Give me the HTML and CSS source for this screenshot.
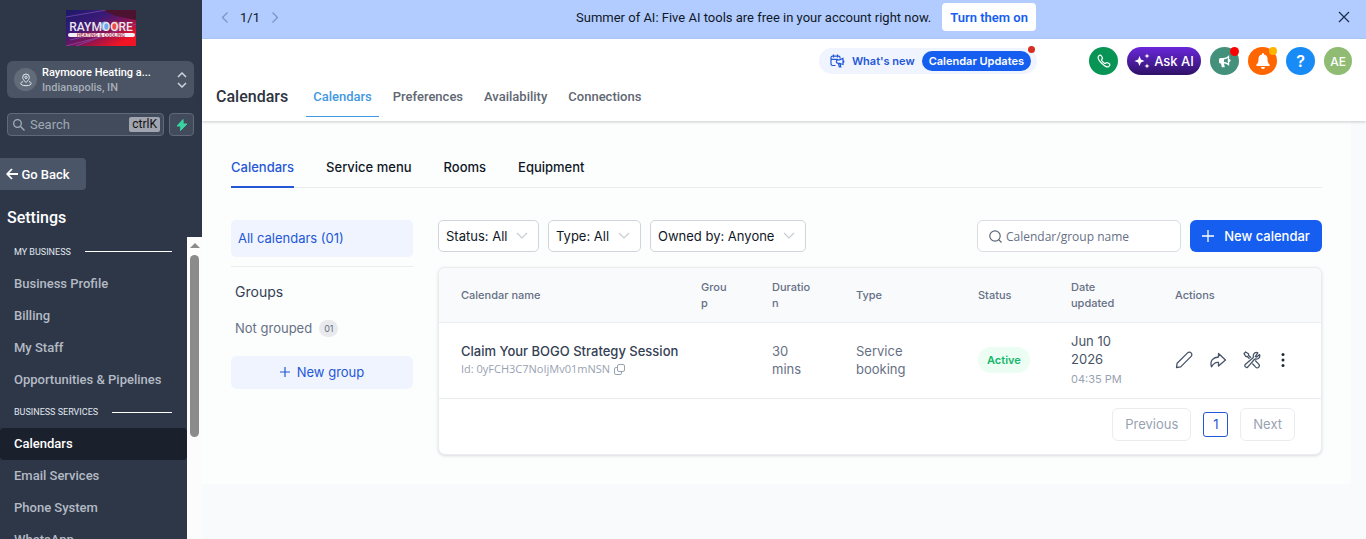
FILE: index.html
```html
<!DOCTYPE html>
<html lang="en">
<head>
  <meta charset="UTF-8">
  <meta name="viewport" content="width=device-width, initial-scale=1.0">
  <title>Calendars</title>
  <link rel="stylesheet" href="styles.css">
</head>
<body>
  <div class="app">
    <aside class="sidebar">
      <svg class="logo" viewBox="0 0 70 36" role="img" aria-label="Raymoore Heating and Cooling">
        <defs>
          <linearGradient id="logoBg" x1="0" y1="0" x2="1" y2="1">
            <stop offset="0" stop-color="#1b1a68"/>
            <stop offset="0.35" stop-color="#3c1a78"/>
            <stop offset="0.6" stop-color="#8a1450"/>
            <stop offset="0.85" stop-color="#f01424"/>
          </linearGradient>
        </defs>
        <rect width="70" height="36" fill="url(#logoBg)"/>
        <path d="M35 0H70V10L50 6Z" fill="#4b1330"/>
        <path d="M0 7L40 0M0 36L46 24M4 30L30 24M10 36L70 14" stroke="#8a5ac8" stroke-width="1" opacity="0.6"/>
        <circle cx="39" cy="16" r="4.500" fill="#6aa8f0"/>
        <circle cx="49" cy="16" r="4.500" fill="#f04848"/>
        <text class="logo-name" x="35" y="21" text-anchor="middle">RAYMOORE</text>
        <rect x="2" y="23" width="67" height="4" rx="2" fill="#f4eef6"/>
        <text class="logo-sub" x="35" y="27" text-anchor="middle">HEATING &amp; COOLING</text>
      </svg>

      <button class="account">
        <span class="account-icon">
          <svg width="14" height="14" viewBox="0 0 14 14" fill="none" stroke="#e2e8f0"><path d="M7 9.500C4.500 7 3.700 5.800 3.700 4.300a3.300 3.300 0 0 1 6.600 0C10.300 5.800 9.500 7 7 9.500Z"/><circle cx="7" cy="4.300" r="1.200"/><path d="M4 8.600C0 9.700 1.500 12.700 7 12.700s7-3 3-4.100"/></svg>
        </span>
        <span class="account-text">
          <strong>Raymoore Heating a...</strong>
          <span>Indianapolis, IN</span>
        </span>
        <svg width="10" height="16" viewBox="0 0 10 16" fill="none" stroke="#cbd5e0" stroke-width="1.500"><path d="M1 5l4-4 4 4M1 11l4 4 4-4"/></svg>
      </button>

      <div class="search-row">
        <label class="side-search">
          <svg width="12" height="12" viewBox="0 0 12 12" fill="none" stroke="#a0aec0" stroke-width="1.300"><circle cx="4.500" cy="4.500" r="3.800"/><path d="M7.500 7.500l4 4"/></svg>
          <input type="text" placeholder="Search" aria-label="Search">
          <kbd>ctrlK</kbd>
        </label>
        <button class="bolt" aria-label="Quick actions">
          <svg width="12" height="12" viewBox="0 0 12 12" fill="#38d39f"><path d="M7 .500L1 7h3.800l-.300 4.500L11 5H7.200Z" stroke="#38d39f" stroke-linejoin="round"/></svg>
        </button>
      </div>

      <button class="go-back">
        <svg width="12" height="12" viewBox="0 0 12 12" fill="none" stroke="#fff" stroke-width="1.800"><path d="M12 6H1.500M6 1L1.200 6 6 11"/></svg>
        Go Back
      </button>
      <h2>Settings</h2>

      <div class="menu-wrap">
        <nav class="menu">
          <div class="menu-title first">MY BUSINESS</div>
          <a href="#">Business Profile</a>
          <a href="#">Billing</a>
          <a href="#">My Staff</a>
          <a href="#">Opportunities &amp; Pipelines</a>
          <div class="menu-title">BUSINESS SERVICES</div>
          <a href="#" class="active">Calendars</a>
          <a href="#">Email Services</a>
          <a href="#">Phone System</a>
          <a href="#">WhatsApp</a>
        </nav>
        <div class="scrollbar">
          <div class="scroll-arrow"></div>
          <div class="scroll-thumb"></div>
        </div>
      </div>
    </aside>

    <div class="page">
      <div class="banner">
        <div class="pager">
          <svg width="6" height="11" viewBox="0 0 6 11" fill="none" stroke="#7d93c4" stroke-width="1.300"><path d="M5.500.500l-5 5 5 5"/></svg>
          <span>1/1</span>
          <svg width="6" height="11" viewBox="0 0 6 11" fill="none" stroke="#7d93c4" stroke-width="1.300"><path d="M.500.500l5 5-5 5"/></svg>
        </div>
        <div class="banner-text">
          <span>Summer of AI: Five AI tools are free in your account right now.</span>
          <button>Turn them on</button>
        </div>
        <button class="close" aria-label="Close">
          <svg width="12" height="12" viewBox="0 0 12 12" fill="none" stroke="#1e3050" stroke-width="1.300"><path d="M1 1l10 10M11 1L1 11"/></svg>
        </button>
      </div>

      <header class="header">
        <div class="header-actions">
          <button class="whats-new">
            <svg width="15" height="14" viewBox="0 0 15 14" fill="none" stroke="#2457d6" stroke-width="1.200"><path d="M5.500 11.500H2.400A1.400 1.400 0 0 1 1 10.100V3.600a1.400 1.400 0 0 1 1.400-1.400h6.200A1.400 1.400 0 0 1 10 3.600v.800M1 5.300h7M3.500.500v3M7.500.500v3M13 4.500v6L9.500 9.300H8a1.700 1.700 0 0 1 0-3.400h1.500ZM8.500 9.500l.800 3.500h1.500l-.700-3.300M13 6.500c1.200 0 1.200 2 0 2"/></svg>
            <span>What's new</span>
            <span class="updates">Calendar Updates</span>
            <span class="dot"></span>
          </button>
          <button class="circle phone" aria-label="Phone">
            <svg width="14" height="14" viewBox="0 0 14 14" fill="none" stroke="#fff" stroke-width="1.200"><path d="M1.300 2.500C2.500.800 3.600.800 4.400 2l.9 1.500c.4.700.2 1.200-.5 1.800-.4.400-.3.700 0 1.200A8 8 0 0 0 7.500 9.200c.5.400.9.400 1.200 0 .6-.7 1.100-.9 1.800-.5l1.500.9c1.200.8 1.200 1.900-.5 3.100C9 14.200 0 6 1.300 2.500Z"/></svg>
          </button>
          <button class="ask-ai">
            <svg width="16" height="16" viewBox="0 0 16 16" fill="#fff"><path d="M5.500 3l1.400 3.600L10.500 8 6.900 9.400 5.500 13 4.100 9.400.500 8l3.600-1.400ZM13 .500l.7 1.800 1.800.7-1.800.7L13 5.500l-.7-1.800-1.800-.7 1.800-.7ZM13 10.500l.7 1.800 1.800.7-1.800.7-.7 1.800-.7-1.800-1.800-.7 1.800-.7Z"/></svg>
            Ask AI
          </button>
          <button class="circle news" aria-label="Announcements">
            <svg width="14" height="14" viewBox="0 0 14 14" fill="#fff"><path fill-rule="evenodd" d="M11.200 1v4.200a1.400 1.400 0 0 1 0 2.800v4C9.500 10.300 8 9.700 6 9.500l.8 3.700H3.800L3 9.500H2.500A1.500 1.500 0 0 1 1 8V5.500A1.500 1.500 0 0 1 2.500 4H5c2.500 0 4.500-1.200 6.200-3ZM9.800 4C8.500 4.900 7.500 5.300 6 5.400v2.700c1.500.1 2.500.4 3.800 1.200Z"/></svg>
            <span class="dot"></span>
          </button>
          <button class="circle bell" aria-label="Notifications">
            <svg width="14" height="16" viewBox="0 0 14 16" fill="#fff"><path d="M7 0a1 1 0 0 1 1 1v.600A4.500 4.500 0 0 1 11.500 6c0 3 .700 4.300 2 5.500.500.500.200 1.500-.600 1.500H1.100c-.800 0-1.100-1-.600-1.500C1.800 10.300 2.500 9 2.500 6A4.500 4.500 0 0 1 6 1.600V1a1 1 0 0 1 1-1ZM5 14h4a2 2 0 0 1-4 0Z"/></svg>
            <span class="dot"></span>
          </button>
          <button class="circle help">?</button>
          <button class="circle avatar">AE</button>
        </div>
        <nav class="header-nav">
          <h1>Calendars</h1>
          <a href="#" class="active">Calendars</a>
          <a href="#">Preferences</a>
          <a href="#">Availability</a>
          <a href="#">Connections</a>
        </nav>
      </header>

      <main class="content">
        <nav class="tabs">
          <a href="#" class="active">Calendars</a>
          <a href="#">Service menu</a>
          <a href="#">Rooms</a>
          <a href="#">Equipment</a>
        </nav>

        <div class="columns">
          <section class="groups">
            <a href="#" class="all">All calendars (01)</a>
            <h3>Groups</h3>
            <a href="#" class="not-grouped">Not grouped <span>01</span></a>
            <button class="new-group">
              <svg width="10" height="10" viewBox="0 0 10 10" stroke="#2457d6" stroke-width="1.200"><path d="M5 0v10M0 5h10"/></svg>
              New group
            </button>
          </section>

          <section class="list">
            <div class="toolbar">
              <div class="filter">
                <select aria-label="Status"><option>Status: All</option></select>
                <svg width="12" height="8" viewBox="0 0 12 8" fill="none" stroke="#c8ccd2" stroke-width="1.200"><path d="M1 1l5 5 5-5"/></svg>
              </div>
              <div class="filter">
                <select aria-label="Type"><option>Type: All</option></select>
                <svg width="12" height="8" viewBox="0 0 12 8" fill="none" stroke="#c8ccd2" stroke-width="1.200"><path d="M1 1l5 5 5-5"/></svg>
              </div>
              <div class="filter">
                <select aria-label="Owner"><option>Owned by: Anyone</option></select>
                <svg width="12" height="8" viewBox="0 0 12 8" fill="none" stroke="#c8ccd2" stroke-width="1.200"><path d="M1 1l5 5 5-5"/></svg>
              </div>
              <label class="search">
                <svg width="13" height="13" viewBox="0 0 13 13" fill="none" stroke="#5d6673" stroke-width="1.200"><circle cx="6" cy="6" r="5.200"/><path d="M9.700 9.700l2.800 2.800"/></svg>
                <input type="text" placeholder="Calendar/group name" aria-label="Calendar or group name">
              </label>
              <button class="new-calendar">
                <svg width="12" height="12" viewBox="0 0 12 12" stroke="#fff" stroke-width="1.300"><path d="M6 0v12M0 6h12"/></svg>
                New calendar
              </button>
            </div>

            <div class="card">
              <table>
                <colgroup>
                  <col>
                  <col class="col-group">
                  <col class="col-duration">
                  <col class="col-type">
                  <col class="col-status">
                  <col class="col-date">
                  <col class="col-actions">
                </colgroup>
                <thead>
                  <tr>
                    <th>Calendar name</th>
                    <th>Group</th>
                    <th>Duration</th>
                    <th>Type</th>
                    <th>Status</th>
                    <th>Date updated</th>
                    <th>Actions</th>
                  </tr>
                </thead>
                <tbody>
                  <tr>
                    <td>
                      <div class="name">Claim Your BOGO Strategy Session</div>
                      <div class="id">Id: 0yFCH3C7NoIjMv01mNSN
                        <svg width="11" height="11" viewBox="0 0 11 11" fill="none" stroke="#98a2b3"><rect x="3.500" y=".500" width="7" height="7" rx="1.500"/><path d="M3.500 3.500H2A1.500 1.500 0 0 0 .500 5v4A1.500 1.500 0 0 0 2 10.500h4A1.500 1.500 0 0 0 7.500 9V7.500"/></svg>
                      </div>
                    </td>
                    <td></td>
                    <td>30 mins</td>
                    <td>Service booking</td>
                    <td><span class="badge">Active</span></td>
                    <td class="date">Jun 10 2026 <small>04:35 PM</small></td>
                    <td>
                      <div class="actions">
                        <button aria-label="Edit"><svg width="18" height="18" viewBox="0 0 18 18" fill="none" stroke="#475467" stroke-width="1.300" stroke-linejoin="round"><path d="M1.500 16.500l.6-4.200L12.600 1.900a2.400 2.400 0 0 1 3.500 3.500L5.700 15.900Z"/></svg></button>
                        <button aria-label="Share"><svg width="18" height="18" viewBox="0 0 18 18" fill="none" stroke="#475467" stroke-width="1.300" stroke-linejoin="round"><path d="M9.500 2.500L16.500 9 9.500 15V11.500C6.500 11 4.500 12.500 2.500 15.800 .500 9.500 4.500 6.200 9.500 6Z"/></svg></button>
                        <button aria-label="Tools"><svg width="18" height="18" viewBox="0 0 18 18" fill="none" stroke="#475467" stroke-width="1.300" stroke-linejoin="round"><path d="M6.500 7.800L4.200 5.500H2.800L1 2.600 2.600 1l2.900 1.800v1.400L8 6.700M12.300 5.700l2.500-3.900C12.500.700 10 2.500 10.300 5.300c.1.800 0 1.200-.5 1.700l-7.600 6.600a1.800 1.800 0 0 0 2.500 2.500l6.600-7.600c.5-.5.900-.6 1.700-.5 2.800.3 4.400-2 3.500-4.400L13.800 6ZM9.300 12.500l3.400 3.600a2 2 0 0 0 3-3L12.200 9.500"/></svg></button>
                        <button aria-label="More"><svg width="12" height="18" viewBox="0 0 12 18" fill="#1f2937"><circle cx="6" cy="3.500" r="1.500"/><circle cx="6" cy="9" r="1.500"/><circle cx="6" cy="14.500" r="1.500"/></svg></button>
                      </div>
                    </td>
                  </tr>
                </tbody>
              </table>
              <div class="pagination">
                <button disabled>Previous</button>
                <button class="current">1</button>
                <button disabled>Next</button>
              </div>
            </div>
          </section>
        </div>
      </main>
    </div>
  </div>
</body>
</html>
```
FILE: styles.css
```css
* {
  box-sizing: border-box;
}
body {
  margin: 0;
  font-family: Inter, "Liberation Sans", sans-serif;
  font-size: 13px;
  color: #101828;
  background: #f9fafb;
}
h1, h2, h3 {
  margin: 0;
  font-weight: 500;
}
a {
  text-decoration: none;
  color: inherit;
}
button, input, select {
  font: inherit;
  color: inherit;
  margin: 0;
  padding: 0;
  border: none;
  background: none;
}
button {
  display: flex;
  align-items: center;
  justify-content: center;
  cursor: pointer;
}
svg {
  display: block;
  flex-shrink: 0;
}
.app {
  display: flex;
  height: 100vh;
  overflow: hidden;
}

/* sidebar */
.sidebar {
  display: flex;
  flex-direction: column;
  align-items: flex-start;
  flex: 0 0 202px;
  min-width: 0;
  padding-top: 10px;
  background: #2d3748;
  color: #fff;
  font-family: Roboto, sans-serif;
}
.logo {
  width: 70px;
  height: 36px;
  align-self: center;
}
.logo-name {
  font: 500 12px Roboto, sans-serif;
  fill: #e8e6ee;
}
.logo-sub {
  font: bold 5px Roboto, sans-serif;
  fill: #b8405c;
}
.account {
  gap: 5px;
  align-self: stretch;
  height: 37px;
  margin: 15px 8px 0 7px;
  padding: 0 7px;
  border-radius: 6px;
  background: #4a5464;
  text-align: left;
}
.account-icon {
  display: flex;
  align-items: center;
  justify-content: center;
  width: 23px;
  height: 23px;
  border-radius: 50%;
  background: #626b79;
}
.account-text {
  flex: 1;
  font-size: 11px;
  line-height: 15px;
  font-weight: 500;
  color: #a7aeb9;
}
.account-text strong {
  display: block;
  font-weight: 500;
  color: #fff;
}
.search-row {
  display: flex;
  gap: 5px;
  align-self: stretch;
  margin: 15px 8px 0 7px;
}
.side-search {
  display: flex;
  align-items: center;
  gap: 5px;
  flex: 1;
  min-width: 0;
  height: 23px;
  padding: 0 3px 0 5px;
  border: 1px solid #5f6978;
  border-radius: 4px;
  background: #414b5b;
}
.side-search input {
  flex: 1;
  min-width: 0;
  outline: none;
}
.side-search input::placeholder {
  color: #a0a8b4;
}
.side-search kbd {
  padding: 0 3px;
  border-radius: 2px;
  background: #a0a5af;
  color: #111;
  font: 12px/15px Roboto, sans-serif;
}
.bolt {
  width: 25px;
  height: 23px;
  border: 1px solid #5f6978;
  border-radius: 4px;
  background: #414b5b;
}
.go-back {
  gap: 3px;
  width: 86px;
  height: 32px;
  margin-top: 22px;
  padding-right: 10px;
  border-radius: 0 4px 4px 0;
  background: #4a5568;
  font-weight: 500;
}
.sidebar h2 {
  margin: 18px 7px 9px;
  font-size: 16px;
  line-height: 20px;
}
.menu-wrap {
  display: flex;
  align-self: stretch;
  flex: 1;
  min-height: 0;
}
.menu {
  flex: 1;
  min-width: 0;
  overflow: hidden;
}
.menu a {
  display: block;
  height: 32px;
  padding-left: 14px;
  line-height: 32px;
  font-weight: 500;
  color: #b4bac4;
}
.menu a.active {
  border-radius: 4px;
  background: #1a202c;
  color: #fff;
}
.menu-title {
  display: flex;
  align-items: center;
  gap: 14px;
  height: 32px;
  padding: 0 15px 0 14px;
  font-size: 9px;
  color: #e2e8f0;
}
.menu-title.first {
  height: 31px;
  padding-bottom: 2px;
}
.menu-title::after {
  content: "";
  flex: 1;
  height: 1px;
  background: #fff;
}
.scrollbar {
  width: 15px;
  background: #fcfcfc;
}
.scroll-arrow {
  width: 0;
  margin: 6px auto 7px;
  border: 5px solid transparent;
  border-top: none;
  border-bottom-color: #8b8b8b;
}
.scroll-thumb {
  width: 9px;
  height: 182px;
  margin: 0 auto;
  border-radius: 5px;
  background: #8b8b8b;
}

/* top banner */
.page {
  display: flex;
  flex-direction: column;
  flex: 1;
  min-width: 0;
}
.banner {
  display: flex;
  align-items: center;
  height: 39px;
  padding: 0 16px 5px 20px;
  background: #b2ccff;
  font-family: Roboto, sans-serif;
}
.pager {
  display: flex;
  align-items: center;
  gap: 12px;
  flex: 0 0 60px;
}
.close {
  justify-content: flex-end;
  flex: 0 0 20px;
}
.banner-text {
  display: flex;
  align-items: center;
  justify-content: center;
  gap: 11px;
  flex: 1;
}
.banner-text button {
  height: 28px;
  padding: 0 8px;
  border-radius: 4px;
  background: #fff;
  color: #155eef;
  font-weight: 600;
}

/* header */
.header {
  position: relative;
  height: 82px;
  background: #fff;
  box-shadow: 0 1px 3px rgba(0,0,0,0.2);
}
.header-actions {
  display: flex;
  align-items: center;
  justify-content: flex-end;
  gap: 9px;
  padding: 8px 14px 0 0;
}
.circle {
  position: relative;
  width: 29px;
  height: 28px;
  border-radius: 50%;
  color: #fff;
}
.phone {
  background: #079455;
}
.news {
  background: #44917b;
}
.bell {
  background: #ff6600;
}
.help {
  background: #188bf6;
  font-size: 16px;
  font-weight: 600;
}
.avatar {
  width: 28px;
  background: #8fbc72;
  font-size: 12px;
  font-weight: 500;
}
.dot {
  position: absolute;
  top: 0;
  right: 0;
  width: 9px;
  height: 9px;
  border-radius: 50%;
  background: #ff0000;
}
.bell .dot {
  width: 8px;
  height: 8px;
  background: #ffb400;
}
.whats-new {
  position: relative;
  gap: 7px;
  height: 26px;
  margin-right: 43px;
  padding: 0 6px 0 11px;
  border-radius: 13px;
  background: #eff4ff;
  color: #2457d6;
  font-size: 11px;
  font-weight: 600;
}
.whats-new .dot {
  top: -2px;
  right: 2px;
  width: 7px;
  height: 7px;
  background: #d92d20;
}
.updates {
  padding: 0 7px;
  border-radius: 10px;
  background: #155eef;
  color: #fff;
  line-height: 20px;
}
.ask-ai {
  gap: 4px;
  width: 74px;
  height: 28px;
  border-radius: 14px;
  background: linear-gradient(#6927da, #2f1266);
  color: #fff;
  font-weight: 500;
}
.header-nav {
  display: flex;
  align-items: center;
  height: 42px;
  padding-left: 14px;
  font-family: Roboto, sans-serif;
  font-weight: 500;
  color: #5f6773;
}
.header-nav h1 {
  margin-right: 18px;
  font-size: 16px;
  color: #2d3340;
}
.header-nav a {
  padding: 2px 7px 0;
  line-height: 38px;
  border-bottom: 1px solid transparent;
}
.header-nav a + a {
  margin-left: 7px;
}
.header-nav a.active {
  color: #4299e1;
  border-color: #4299e1;
}

/* content */
.content {
  padding: 27px 29px 29px;
  margin-right: 15px;
  background: #fcfdfd;
}
.tabs {
  display: flex;
  gap: 32px;
  border-bottom: 1px solid #eaecf0;
  font-weight: 500;
}
.tabs a {
  height: 40px;
  margin-bottom: -1px;
  line-height: 39px;
}
.tabs a.active {
  border-bottom: 2px solid #2457d6;
  color: #2457d6;
}
.columns {
  display: flex;
  gap: 25px;
  margin-top: 32px;
}
.groups {
  flex: 0 0 182px;
}
.all {
  display: block;
  padding: 0 7px;
  border-radius: 5px;
  background: #eff4ff;
  color: #2457d6;
  line-height: 37px;
}
.groups h3 {
  margin-top: 9px;
  padding: 15px 4px 0;
  border-top: 1px solid #eaecf0;
  font-size: 14px;
  font-weight: 400;
  line-height: 20px;
  color: #344054;
}
.not-grouped {
  display: flex;
  align-items: center;
  gap: 7px;
  height: 20px;
  margin: 16px 4px 18px;
  color: #667085;
}
.not-grouped span {
  padding: 0 5px;
  border-radius: 9px;
  background: #e9eaee;
  font-size: 9px;
  line-height: 17px;
}
.new-group {
  gap: 7px;
  width: 100%;
  height: 33px;
  padding-bottom: 2px;
  border-radius: 6px;
  background: #eff4ff;
  color: #2457d6;
}
.list {
  flex: 1;
  min-width: 0;
}
.toolbar {
  display: flex;
  gap: 9px;
}
.filter {
  position: relative;
}
.filter select {
  appearance: none;
  height: 32px;
  padding: 0 30px 0 7px;
  border: 1px solid #d0d5dd;
  border-radius: 5px;
  background: #fff;
}
.filter svg {
  position: absolute;
  top: 12px;
  right: 11px;
  pointer-events: none;
}
.search {
  display: flex;
  align-items: center;
  gap: 4px;
  width: 204px;
  height: 32px;
  margin-left: auto;
  padding: 0 11px;
  border: 1px solid #d9dde3;
  border-radius: 6px;
  background: #fff;
}
.search input {
  flex: 1;
  min-width: 0;
  font-family: "Open Sans", sans-serif;
  font-size: 12px;
  outline: none;
}
.search input::placeholder {
  color: #667085;
}
.new-calendar {
  gap: 10px;
  width: 132px;
  height: 32px;
  border-radius: 6px;
  background: #155eef;
  color: #fff;
  font-weight: 500;
}
.card {
  margin-top: 15px;
  border: 1px solid #eaecf0;
  border-radius: 7px;
  background: #fff;
  box-shadow: 0 1px 3px rgba(16,24,40,0.15);
  overflow: hidden;
}
table {
  width: 100%;
  table-layout: fixed;
  border-collapse: collapse;
}
th, td {
  padding: 0 22px;
  border-bottom: 1px solid #eaecf0;
  text-align: left;
  overflow-wrap: break-word;
}
th {
  height: 54px;
  background: #f9fafb;
  font-size: 11px;
  font-weight: 500;
  line-height: 16px;
  color: #667085;
}
td {
  height: 76px;
  line-height: 18px;
  color: #667085;
}
.col-group {
  width: 71px;
}
.col-duration {
  width: 84px;
}
.col-type {
  width: 122px;
}
.col-status {
  width: 93px;
}
.col-date {
  width: 104px;
}
.col-actions {
  width: 168px;
}
.name {
  font-weight: 500;
  color: #344054;
  white-space: nowrap;
}
.id {
  display: flex;
  align-items: center;
  gap: 4px;
  font-family: "Open Sans", sans-serif;
  font-size: 11px;
  color: #98a2b3;
  white-space: nowrap;
}
.badge {
  display: inline-block;
  padding: 0 9px;
  border-radius: 13px;
  background: #ecfdf3;
  color: #12b76a;
  font-size: 11px;
  font-weight: 600;
  line-height: 26px;
}
td.date {
  color: #475467;
}
.date small {
  display: block;
  margin-top: 2px;
  font-size: 11px;
  color: #98a2b3;
}
.actions {
  display: flex;
  gap: 16px;
}
.pagination {
  display: flex;
  align-items: center;
  justify-content: flex-end;
  gap: 12px;
  height: 55px;
  padding: 0 26px 4px 0;
}
.pagination button {
  height: 33px;
  padding: 0 12px;
  border: 1px solid #eaecf0;
  border-radius: 6px;
  color: #98a2b3;
}
.pagination .current {
  width: 25px;
  height: 25px;
  padding: 0;
  border-color: #2457d6;
  border-radius: 3px;
  color: #2457d6;
}
```
